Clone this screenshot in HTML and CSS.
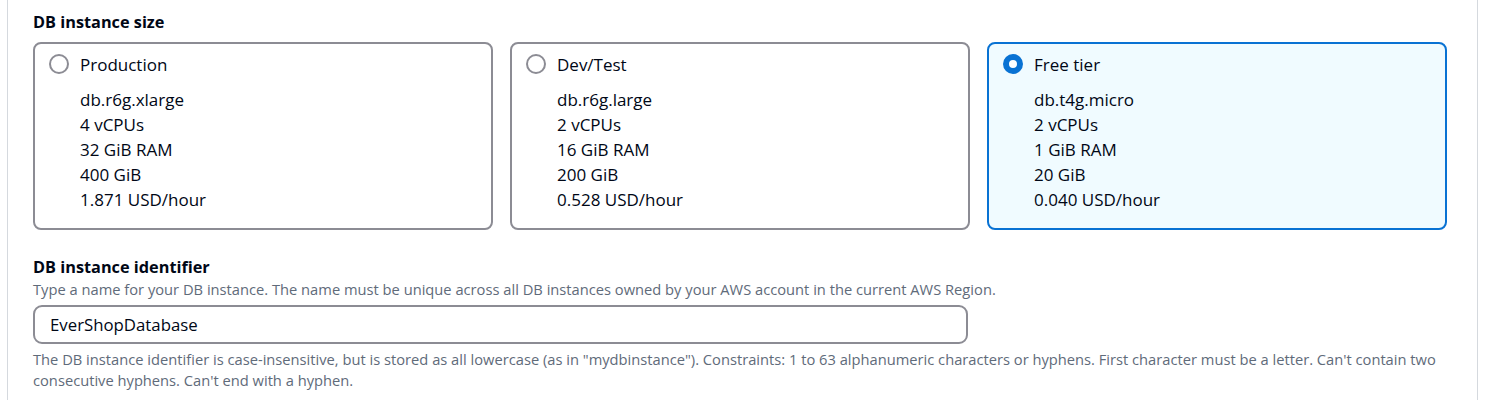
FILE: index.html
```html
<!DOCTYPE html>
<html>
<head>
<meta charset="utf-8">
<link rel="stylesheet" href="styles.css">
</head>
<body>
<div class="panel">
  <div class="field">
    <div class="label">DB instance size</div>
    <div class="tiles">
      <div class="tile">
        <div class="tile-head"><span class="radio"></span><span class="tile-title">Production</span></div>
        <div class="tile-body">
          <div>db.r6g.xlarge</div>
          <div>4 vCPUs</div>
          <div>32 GiB RAM</div>
          <div>400 GiB</div>
          <div>1.871 USD/hour</div>
        </div>
      </div>
      <div class="tile">
        <div class="tile-head"><span class="radio"></span><span class="tile-title">Dev/Test</span></div>
        <div class="tile-body">
          <div>db.r6g.large</div>
          <div>2 vCPUs</div>
          <div>16 GiB RAM</div>
          <div>200 GiB</div>
          <div>0.528 USD/hour</div>
        </div>
      </div>
      <div class="tile selected">
        <div class="tile-head"><span class="radio checked"></span><span class="tile-title">Free tier</span></div>
        <div class="tile-body">
          <div>db.t4g.micro</div>
          <div>2 vCPUs</div>
          <div>1 GiB RAM</div>
          <div>20 GiB</div>
          <div>0.040 USD/hour</div>
        </div>
      </div>
    </div>
  </div>
  <div class="field field2">
    <div class="label">DB instance identifier</div>
    <div class="desc">Type a name for your DB instance. The name must be unique across all DB instances owned by your AWS account in the current AWS Region.</div>
    <div class="input">EverShopDatabase</div>
    <div class="constraint">The DB instance identifier is case-insensitive, but is stored as all lowercase (as in "mydbinstance"). Constraints: 1 to 63 alphanumeric characters or hyphens. First character must be a letter. Can't contain two consecutive hyphens. Can't end with a hyphen.</div>
  </div>
</div>
</body>
</html>
```
FILE: styles.css
```css
html, body { margin: 0; padding: 0; background: #fff; }
body {
  font-family: "Open Sans", "Noto Sans", sans-serif;
  color: #000716;
  width: 1488px;
  height: 400px;
  overflow: hidden;
}
.panel {
  margin-left: 7px;
  width: 1471px;
  height: 400px;
  border-left: 1px solid #d5d9de;
  border-right: 1px solid #d5d9de;
  box-sizing: border-box;
  padding: 11px 0 0 25px;
}
.label {
  font-weight: 700;
  font-size: 16.3px;
  line-height: 22px;
}
.tiles {
  display: flex;
  gap: 17px;
  margin-top: 9px;
}
.tile {
  width: 460px;
  height: 188px;
  box-sizing: border-box;
  border: 2px solid #8c8c94;
  border-radius: 8px;
  padding: 8px 14px;
}
.tile.selected {
  border-color: #0972d3;
  background: #f0fbff;
}
.tile-head {
  display: flex;
  align-items: center;
  gap: 11px;
  height: 24px;
}
.radio {
  width: 20px;
  height: 20px;
  box-sizing: border-box;
  border: 2px solid #8c8c94;
  border-radius: 50%;
  background: #fff;
  flex: none;
}
.radio.checked {
  border: 6.5px solid #0972d3;
}
.tile-title, .tile-body {
  font-size: 17px;
}
.tile-body {
  margin-top: 11px;
  padding-left: 31px;
  line-height: 25px;
}
.field2 { margin-top: 26px; }
.desc {
  margin-top: 2px;
  font-size: 14.7px;
  color: #5f6b7a;
  line-height: 18px;
}
.input {
  margin-top: 7px;
  width: 935px;
  height: 39px;
  box-sizing: border-box;
  border: 2px solid #8c8c94;
  border-radius: 9px;
  padding: 0 15px;
  font-size: 16.8px;
  display: flex;
  align-items: center;
}
.constraint {
  margin-top: 5px;
  font-size: 14.7px;
  color: #5f6b7a;
  line-height: 21px;
  width: 1420px;
}
```
